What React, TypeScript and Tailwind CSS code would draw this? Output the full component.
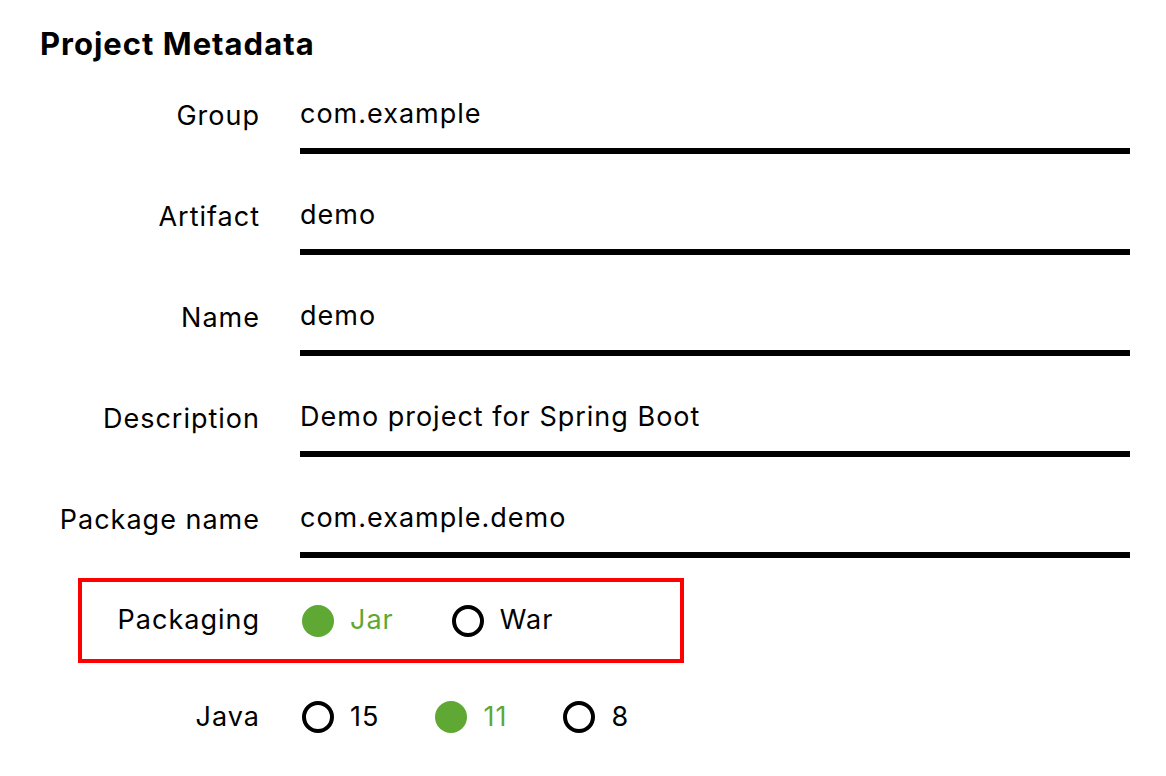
import React from "react";

const fields = [
  { label: "Group", value: "com.example" },
  { label: "Artifact", value: "demo" },
  { label: "Name", value: "demo" },
  { label: "Description", value: "Demo project for Spring Boot" },
  { label: "Package name", value: "com.example.demo" },
];

function Radio({ label, checked }: { label: string; checked?: boolean }) {
  return (
    <div className="flex items-center">
      {checked ? (
        <span className="w-[32px] h-[32px] rounded-full bg-[#5ea833] shrink-0" />
      ) : (
        <span className="w-[32px] h-[32px] rounded-full border-[4px] border-black shrink-0" />
      )}
      <span className={"ml-[16px] " + (checked ? "text-[#5ea833]" : "text-black")}>{label}</span>
    </div>
  );
}

export default function App() {
  return (
    <div
      className="w-[1166px] h-[776px] bg-white text-black overflow-hidden tracking-[1px]"
      style={{ fontFamily: "Inter, 'Noto Sans', sans-serif" }}
    >
      <div className="pl-[40px] pt-[24px]">
        <h1 className="text-[31px] leading-[40px] font-bold">Project Metadata</h1>
      </div>
      <div className="mt-[32px] flex flex-col gap-[43px] text-[27px]">
        {fields.map((f) => (
          <div key={f.label} className="flex items-start">
            <div className="w-[260px] text-right leading-[36px] pt-[2px]">{f.label}</div>
            <div className="ml-[40px] w-[830px] leading-[36px] pb-[16px] border-b-[6px] border-black">
              {f.value}
            </div>
          </div>
        ))}
      </div>
      <div className="mt-[20px] ml-[78px] w-[606px] h-[85px] border-[4px] border-[#ff0000] flex items-center text-[27px]">
        <div className="w-[178px] text-right">Packaging</div>
        <div className="ml-[42px] flex gap-[58px]">
          <Radio label="Jar" checked />
          <Radio label="War" />
        </div>
      </div>
      <div className="mt-[34px] flex items-center text-[27px]">
        <div className="w-[260px] text-right">Java</div>
        <div className="ml-[42px] flex gap-[56px]">
          <Radio label="15" />
          <Radio label="11" checked />
          <Radio label="8" />
        </div>
      </div>
    </div>
  );
}
